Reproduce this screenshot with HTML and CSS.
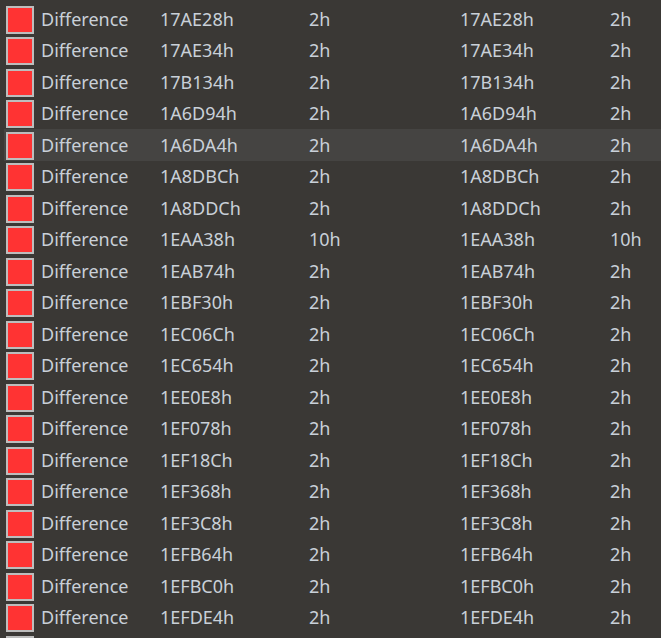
FILE: index.html
```html
<!DOCTYPE html>
<html>
<head>
<meta charset="utf-8">
<link rel="stylesheet" href="styles.css">
</head>
<body>
<div class="list">
  <div class="row"><span class="mark"></span><span>Difference</span><span>17AE28h</span><span>2h</span><span>17AE28h</span><span>2h</span></div>
  <div class="row"><span class="mark"></span><span>Difference</span><span>17AE34h</span><span>2h</span><span>17AE34h</span><span>2h</span></div>
  <div class="row"><span class="mark"></span><span>Difference</span><span>17B134h</span><span>2h</span><span>17B134h</span><span>2h</span></div>
  <div class="row"><span class="mark"></span><span>Difference</span><span>1A6D94h</span><span>2h</span><span>1A6D94h</span><span>2h</span></div>
  <div class="row selected"><span class="mark"></span><span>Difference</span><span>1A6DA4h</span><span>2h</span><span>1A6DA4h</span><span>2h</span></div>
  <div class="row"><span class="mark"></span><span>Difference</span><span>1A8DBCh</span><span>2h</span><span>1A8DBCh</span><span>2h</span></div>
  <div class="row"><span class="mark"></span><span>Difference</span><span>1A8DDCh</span><span>2h</span><span>1A8DDCh</span><span>2h</span></div>
  <div class="row"><span class="mark"></span><span>Difference</span><span>1EAA38h</span><span>10h</span><span>1EAA38h</span><span>10h</span></div>
  <div class="row"><span class="mark"></span><span>Difference</span><span>1EAB74h</span><span>2h</span><span>1EAB74h</span><span>2h</span></div>
  <div class="row"><span class="mark"></span><span>Difference</span><span>1EBF30h</span><span>2h</span><span>1EBF30h</span><span>2h</span></div>
  <div class="row"><span class="mark"></span><span>Difference</span><span>1EC06Ch</span><span>2h</span><span>1EC06Ch</span><span>2h</span></div>
  <div class="row"><span class="mark"></span><span>Difference</span><span>1EC654h</span><span>2h</span><span>1EC654h</span><span>2h</span></div>
  <div class="row"><span class="mark"></span><span>Difference</span><span>1EE0E8h</span><span>2h</span><span>1EE0E8h</span><span>2h</span></div>
  <div class="row"><span class="mark"></span><span>Difference</span><span>1EF078h</span><span>2h</span><span>1EF078h</span><span>2h</span></div>
  <div class="row"><span class="mark"></span><span>Difference</span><span>1EF18Ch</span><span>2h</span><span>1EF18Ch</span><span>2h</span></div>
  <div class="row"><span class="mark"></span><span>Difference</span><span>1EF368h</span><span>2h</span><span>1EF368h</span><span>2h</span></div>
  <div class="row"><span class="mark"></span><span>Difference</span><span>1EF3C8h</span><span>2h</span><span>1EF3C8h</span><span>2h</span></div>
  <div class="row"><span class="mark"></span><span>Difference</span><span>1EFB64h</span><span>2h</span><span>1EFB64h</span><span>2h</span></div>
  <div class="row"><span class="mark"></span><span>Difference</span><span>1EFBC0h</span><span>2h</span><span>1EFBC0h</span><span>2h</span></div>
  <div class="row"><span class="mark"></span><span>Difference</span><span>1EFDE4h</span><span>2h</span><span>1EFDE4h</span><span>2h</span></div>
  <div class="row"><span class="mark"></span></div>
</div>
</body>
</html>
```
FILE: styles.css
```css
html, body {
  margin: 0;
  padding: 0;
  background: #3a3835;
  overflow: hidden;
  height: 638px;
}
.list {
  padding-top: 3px;
  padding-left: 4px;
  font-family: "Noto Sans", "Open Sans", sans-serif;
  font-size: 18px;
  color: #c9d0d8;
}
.row {
  display: grid;
  grid-template-columns: 35px 119px 149px 151px 150px 1fr;
  align-items: center;
  height: 31.5px;
  padding-left: 2px;
  white-space: nowrap;
}
.row.selected {
  background: #454442;
}
.mark {
  width: 24px;
  height: 24px;
  margin-top: 2px;
  background: #ff3333;
  border: 2px solid #bdbdbd;
}
```
